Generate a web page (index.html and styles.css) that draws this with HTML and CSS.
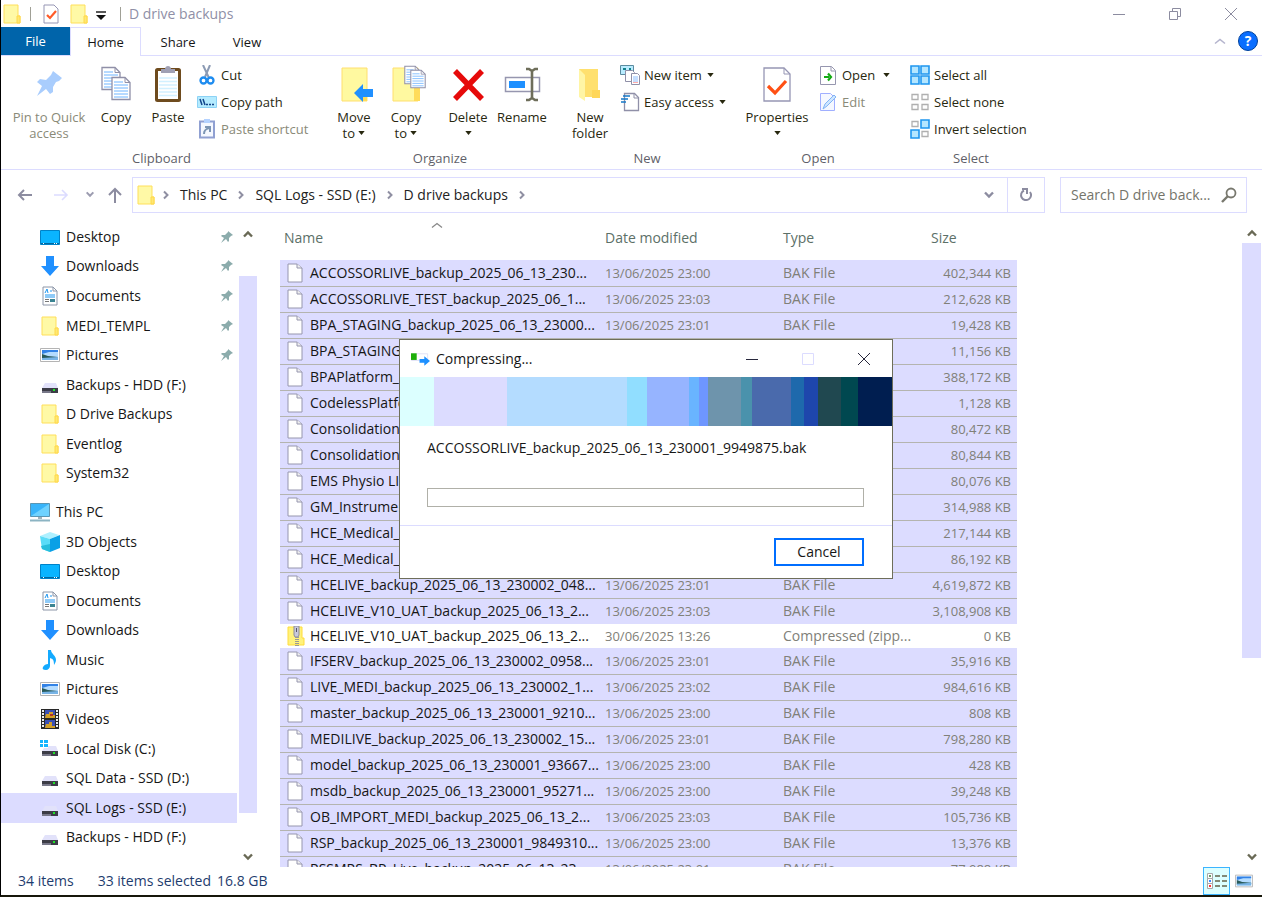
FILE: index.html
```html
<!DOCTYPE html>
<html lang="en">
<head>
<meta charset="utf-8">
<title>D drive backups</title>
<link rel="stylesheet" href="styles.css">
</head>
<body>
<svg class="defs" aria-hidden="true">
  <symbol id="folder" viewBox="0 0 18 20"><path d="M1 1h14v11h2v7H1z" fill="#fff9a6" stroke="#ffdf5a"/><path d="M14 18v-6h3v7h-3z" fill="#ffe873" stroke="#ffd84a"/></symbol>
  <symbol id="file" viewBox="0 0 16 20"><path d="M1 1h9l5 4v14H1z" fill="#fff" stroke="#9696ae"/><path d="M10 1v4h5" fill="#eee" stroke="#9696ae"/></symbol>
  <symbol id="zip" viewBox="0 0 18 20"><path d="M1 1h14v11h2v7H1z" fill="#fff27c" stroke="#ffdc3c"/><path d="M7 0h5v9l-1 2H8L7 9z" fill="#c8c8dc" stroke="#8c8c9c"/><path d="M9.500 2v4" stroke="#556"/><path d="M10 11v9" stroke="#999" stroke-width="4" stroke-dasharray="1 1"/></symbol>
  <symbol id="desk" viewBox="0 0 20 20"><path d="M.5 3.500h19v14H.5z" fill="#0ab4ff" stroke="#0082c8"/><path d="M1 16.500h18" stroke="#0068a0"/><path d="M3 16.500h1m10 0h1m1 0h1" stroke="#fff"/></symbol>
  <symbol id="down" viewBox="0 0 20 20"><path d="M6 0h8v10h5l-9 10L1 10h5z" fill="#2090ff"/></symbol>
  <symbol id="doc" viewBox="0 0 20 20"><path d="M3 1h10l4 4v14H3z" fill="#fff" stroke="#8c96a8"/><path d="M13 1v4h4" fill="none" stroke="#8c96a8"/><path d="M5 7l2-4 1 4M10 5h2M5 9h10M5 11h10" stroke="#1e96f0" fill="none"/><path d="M5 13.500h4M5 15.500h4" stroke="#777"/><path d="M10 13h5v3h-5z" fill="#3b8492"/></symbol>
  <symbol id="pic" viewBox="0 0 20 20"><path d="M.5 3.500h19v13H.5z" fill="#fff" stroke="#b4b4b4"/><path d="M2 5h16v10H2z" fill="#b4dcff"/><path d="M2 5h16v2L9 7 2 9z" fill="#3282e6"/><path d="M2 9l6 2 10 1v1l-16 1z" fill="#285a5a"/><path d="M2 13l16-1v3H2z" fill="#78b4e6"/></symbol>
  <symbol id="drive" viewBox="0 0 20 20"><path d="M5 8h11l2 5H2z" fill="#e2e2fa"/><path d="M2 13h16v5H2z" fill="#3c3c46"/><path d="M2 16h9v2H2z" fill="#777788"/><path d="M13 14h2v2h-2z" fill="#1ee628"/></symbol>
  <symbol id="cdrive" viewBox="0 0 20 20"><path d="M0 1h3v3H0zM4 1h4v3H4zM0 5h3v3H0zM4 5h4v3H4z" fill="#14b4ff"/><path d="M8 7h8l2 5H2l2-3h4z" fill="#e2e2fa"/><path d="M2 12h16v5H2z" fill="#3c3c46"/><path d="M2 15h9v2H2z" fill="#777788"/><path d="M13 13h2v2h-2z" fill="#1ee628"/></symbol>
  <symbol id="pc" viewBox="0 0 20 20"><path d="M.5 1.500h19v13H.5z" fill="#38b4fa" stroke="#5a96b4"/><path d="M1 14L19 2v12z" fill="#6ed2ff"/><path d="M8 15h4v2H8z" fill="#a0b4be"/><path d="M0 18.500h20" stroke="#8cb4c3" stroke-width="2"/></symbol>
  <symbol id="cube" viewBox="0 0 20 20"><path d="M0 4l10-4 9 3-9 4z" fill="#aef0ff"/><path d="M0 4l10 3v13L2 17z" fill="#5adcf8"/><path d="M10 7l10-4v13l-10 4z" fill="#0aa0e6"/><path d="M1 14l9-2v8l-8-3z" fill="#28bedc"/></symbol>
  <symbol id="music" viewBox="0 0 20 20"><path d="M8 0h3c0 4 5 5 5 10 0 2-1 3-2 5 0-5-1-6-4-7v8c0 2-2 4-4 4-3 0-4-1-3-3s3-3 5-3z" fill="#14aaff"/></symbol>
  <symbol id="video" viewBox="0 0 20 20"><path d="M1 0h18v20H1z" fill="#282828"/><path d="M3 1v18M17 1v18" stroke="#f0f0f0" stroke-width="2" stroke-dasharray="2 1"/><path d="M5 1h10v8H5zM5 11h10v8H5z" fill="#3c50b4"/><path d="M6 5h3V3h4v3h2v3H5zM6 15h3v-2h3v4h3v2H5z" fill="#d2a028"/><path d="M10 5h3v2h-3z" fill="#b43228"/></symbol>
  <symbol id="pin" viewBox="0 0 14 14"><path d="M8 1l5 4-2 1-2 2v3l-1 1-2-3-5 4 3-5-3-2 1-1h3l3-3z" fill="#8cacac"/></symbol>
  <symbol id="up" viewBox="0 0 12 8"><path d="M2 6.500l4-4 4 4" fill="none" stroke="#696955" stroke-width="2.400"/></symbol>
  <symbol id="dn" viewBox="0 0 12 8"><path d="M2 1.500l4 4 4-4" fill="none" stroke="currentColor" stroke-width="2.400"/></symbol>
  <symbol id="right" viewBox="0 0 8 10"><path d="M2 1.500L5.500 5 2 8.500" fill="none" stroke="#8f8fa2" stroke-width="2"/></symbol>
  <symbol id="caret" viewBox="0 0 8 5"><path d="M0 0h8L4 5z" fill="#28280f"/></symbol>
  <symbol id="sheet" viewBox="0 0 20 24"><path d="M1 1h13l5 5v17H1z" fill="#fff" stroke="#9090a8" stroke-width="1.300"/><path d="M14 1v5h5" fill="none" stroke="#9090a8"/><path d="M3 5.500h9M3 8.500h14M3 11.500h14M3 14.500h14M3 17.500h14M3 20.500h14" stroke="#6eb4ff"/></symbol>
</svg>

<div class="window">
  <header class="titlebar">
    <svg class="i-folder"><use href="#folder"/></svg>
    <span class="bar"></span>
    <svg class="i-check" viewBox="0 0 16 20"><path d="M1 1h10l4 4v14H1z" fill="#fff" stroke="#9696b4"/><path d="M4 11l3 3 6-7" fill="none" stroke="#ff5a28" stroke-width="2.200"/></svg>
    <svg class="i-folder"><use href="#folder"/></svg>
    <svg class="i-qat" viewBox="0 0 10 9"><path d="M0 1h10" stroke="#222" stroke-width="1.500"/><path d="M0 4h10L5 9z" fill="#111"/></svg>
    <span class="bar"></span>
    <h1 class="title">D drive backups</h1>
    <div class="winbtns">
      <button aria-label="Minimize"><svg viewBox="0 0 14 14"><path d="M1 7.500h12"/></svg></button>
      <button aria-label="Restore"><svg viewBox="0 0 14 14"><path d="M1.500 4.500h8v8h-8zM4.500 4V1.500h8v8H10"/></svg></button>
      <button aria-label="Close"><svg viewBox="0 0 14 14"><path d="M1 1l12 12M13 1L1 13"/></svg></button>
    </div>
  </header>

  <nav class="tabs">
    <button class="tab file-tab">File</button>
    <button class="tab active">Home</button>
    <button class="tab">Share</button>
    <button class="tab">View</button>
    <div class="tab-end">
      <button aria-label="Collapse ribbon"><svg class="i-col" viewBox="0 0 12 8"><path d="M1 6.500l5-4 5 4" fill="none" stroke="#b4b4cd" stroke-width="1.600"/></svg></button>
      <button class="help" aria-label="Help">?</button>
    </div>
  </nav>

  <section class="ribbon">
    <div class="group clipboard">
      <div class="tools">
        <button class="big w80 off"><svg viewBox="0 0 36 36"><path d="M22 5l9 7-3 3-3 1-3 5v5l-3 2-4-5-9 7 5-10-5-4 3-3 6 1 5-5z" fill="#a9cdfd"/></svg>Pin to Quick access</button>
        <button class="big w54"><svg viewBox="0 0 36 36"><svg x="3" y="0" width="20" height="25"><use href="#sheet"/></svg><svg x="13" y="10" width="20" height="25"><use href="#sheet"/></svg></svg>Copy</button>
        <button class="big w50"><svg viewBox="0 0 36 36"><rect x="6.500" y="3.500" width="23" height="31" rx="1" fill="#fff" stroke="#6e4b1e" stroke-width="3"/><path d="M9 12h18M9 15.500h18M9 19h18M9 22.500h18M9 26h18M9 29.500h18" stroke="#d2f0ff" stroke-width="1.500"/><path d="M11 3h4c0-4 6-4 6 0h4v4H11z" fill="#a0a0b4"/></svg>Paste</button>
        <div class="smalls">
          <button><svg viewBox="0 0 20 20"><path d="M6 0l6 13M13 0L8 12" stroke="#8c9bb4" stroke-width="2"/><circle cx="6.500" cy="15.500" r="3" fill="none" stroke="#1e8cf0" stroke-width="2.300"/><circle cx="13.500" cy="15.500" r="3" fill="none" stroke="#1e8cf0" stroke-width="2.300"/></svg>Cut</button>
          <button><svg viewBox="0 0 20 20"><path d="M.5 4.500h19v11H.5z" fill="#b4ebff" stroke="#8cd2f5"/><path d="M3 7l2 6M6 7l2 6M9 12.500h2M12 12.500h2M15 12.500h2" stroke="#14468c" stroke-width="1.500"/></svg>Copy path</button>
          <button class="off"><svg viewBox="0 0 20 20"><path d="M3 2.500h14v16H3z" fill="#f5f8ff" stroke="#90a0d2" stroke-width="2"/><path d="M7 0h6v4H7z" fill="#b4d2ff"/><path d="M7 15c0-4 2-5 5-6M8 8h5v5" fill="none" stroke="#7d96b4" stroke-width="2"/></svg>Paste shortcut</button>
        </div>
      </div>
      <h2>Clipboard</h2>
    </div>
    <div class="group organize">
      <div class="tools">
        <button class="big w52"><svg viewBox="0 0 36 36"><path d="M6 2h25v33H6z" fill="#fff9a0" stroke="#ffdf6e"/><path d="M26 25h5v10h-5z" fill="#ffdc5a"/><path d="M18 27l9-9v5h10v8H27v5z" fill="#2090ff"/></svg>Move<span>to <svg class="caret"><use href="#caret"/></svg></span></button>
        <button class="big w52"><svg viewBox="0 0 36 36"><path d="M5 2h25v33H5z" fill="#fff9a0" stroke="#ffdf6e"/><path d="M26 22h6v13h-6z" fill="#ffdc5a"/><svg x="16" y="-1" width="16" height="20"><use href="#sheet"/></svg><svg x="22" y="3" width="16" height="20"><use href="#sheet"/></svg></svg>Copy<span>to <svg class="caret"><use href="#caret"/></svg></span></button>
        <button class="big w52 del"><svg viewBox="0 0 36 36"><path d="M5 5l27 28M32 5L5 33" stroke="#e60a0a" stroke-width="5.500"/></svg>Delete<span><svg class="caret"><use href="#caret"/></svg></span></button>
        <button class="big w56"><svg viewBox="0 0 36 36"><path d="M1.500 11.500h34v14h-34z" fill="#fff" stroke="#9696af" stroke-width="1.500"/><path d="M5 15h16v7H5z" fill="#1e90ff"/><path d="M22 3h3l3 2 3-2h3M22 34h3l3-2 3 2h3M28 4v29" fill="none" stroke="#6e6e5a" stroke-width="2.600"/></svg>Rename</button>
      </div>
      <h2>Organize</h2>
    </div>
    <div class="group new">
      <div class="tools">
        <button class="big w52"><svg viewBox="0 0 36 36"><path d="M7 3h19v28H7z" fill="#ffe06e"/><path d="M7 3l6 6v26l-6-4z" fill="#fff5a5"/><path d="M20 24h8v8h-8z" fill="#ffd75a"/></svg>New<br>folder</button>
        <div class="smalls">
          <button><svg viewBox="0 0 20 20"><path d="M.5 .5h13v9H.5z" fill="#b9ecff" stroke="#5c8ca0"/><path d="M3 4h3M9 4h2" stroke="#14828c" stroke-width="2"/><path d="M5.500 5.500h7l2 2v9h-9z" fill="#fff" stroke="#9090a8"/><path d="M11.500 8.500h6l2 2v9h-8z" fill="#fff" stroke="#9090a8"/><path d="M13 12h5M13 14h5M13 16h5" stroke="#8cbeff"/><path d="M13 17.500h5" stroke="#ffaaaa"/></svg>New item <svg class="caret"><use href="#caret"/></svg></button>
          <button><svg viewBox="0 0 20 20"><path d="M4.500 1.500h10l4 4v13h-14z" fill="#fff" stroke="#9090a8" stroke-width="1.300"/><path d="M14 2v4h4" fill="none" stroke="#9090a8"/><path d="M3 4h7M1 7h7M1 10h5" stroke="#1478c8" stroke-width="1.600"/></svg>Easy access <svg class="caret"><use href="#caret"/></svg></button>
        </div>
      </div>
      <h2>New</h2>
    </div>
    <div class="group open">
      <div class="tools">
        <button class="big w70"><svg viewBox="0 0 36 36"><path d="M5 2h20l6 6v27H5z" fill="#fff" stroke="#9696b4" stroke-width="1.300"/><path d="M25 2v6h6" fill="none" stroke="#9696b4"/><path d="M9 20l7 7 11-12" fill="none" stroke="#ff5014" stroke-width="3.200"/></svg>Properties<span><svg class="caret"><use href="#caret"/></svg></span></button>
        <div class="smalls">
          <button><svg viewBox="0 0 20 20"><path d="M2.500 1.500h11l4 4v14h-15z" fill="#fff" stroke="#9696af"/><path d="M13 2v4h4" fill="none" stroke="#9696af"/><path d="M6 12h5M10 8.500l3 3.500-3 3.500" fill="none" stroke="#14aa14" stroke-width="2.200"/></svg>Open <svg class="caret wide"><use href="#caret"/></svg></button>
          <button class="off"><svg viewBox="0 0 20 20"><path d="M2.500 1.500h10l4 4v13h-14z" fill="#f5f8ff" stroke="#a0afff"/><path d="M5 17l2-5L16 3l2 2-9 9z" fill="#cde6ff" stroke="#82b4f5"/></svg>Edit</button>
        </div>
      </div>
      <h2>Open</h2>
    </div>
    <div class="group select">
      <div class="tools">
        <div class="smalls">
          <button><svg viewBox="0 0 20 20"><path d="M1 1h8v8H1zM11 1h8v8h-8zM1 11h8v8H1zM11 11h8v8h-8z" fill="#b4e6ff" stroke="#1e96f0" stroke-width="1.600"/></svg>Select all</button>
          <button><svg viewBox="0 0 20 20"><path d="M2 2.500h6v5H2zM12 2.500h6v5h-6zM2 12.500h6v5H2zM12 12.500h6v5h-6z" fill="#fff" stroke="#b0b0b0" stroke-width="1.300"/></svg>Select none</button>
          <button><svg viewBox="0 0 20 20"><path d="M2 2.500h6v5H2zM12 12.500h6v5h-6z" fill="#fff" stroke="#b0b0b0" stroke-width="1.300"/><path d="M11 1h8v8h-8zM1 11h8v8H1z" fill="#b4e6ff" stroke="#1e96f0" stroke-width="1.600"/></svg>Invert selection</button>
        </div>
      </div>
      <h2>Select</h2>
    </div>
  </section>

  <section class="address">
    <div class="history">
      <button aria-label="Back"><svg class="s16" viewBox="0 0 16 16"><path d="M15 8H2M7 3L2 8l5 5" fill="none" stroke="#8c8ca0" stroke-width="2"/></svg></button>
      <button aria-label="Forward"><svg class="s16" viewBox="0 0 16 16"><path d="M1 8h13M9 3l5 5-5 5" fill="none" stroke="#dcdcff" stroke-width="1.600"/></svg></button>
      <button aria-label="Recent locations" class="recent"><svg class="chev"><use href="#dn"/></svg></button>
      <button aria-label="Up"><svg class="s16" viewBox="0 0 16 16"><path d="M8 16V2M2 8l6-6 6 6" fill="none" stroke="#8c8ca0" stroke-width="2"/></svg></button>
    </div>
    <div class="pathbox">
      <div class="crumbs">
        <svg class="i-folder"><use href="#folder"/></svg>
        <svg class="sep"><use href="#right"/></svg><a href="#pc-view">This PC</a>
        <svg class="sep"><use href="#right"/></svg><a href="#e-view">SQL Logs - SSD (E:)</a>
        <svg class="sep"><use href="#right"/></svg><a href="#d-view">D drive backups</a>
        <svg class="sep"><use href="#right"/></svg>
      </div>
      <button class="drop" aria-label="Previous locations"><svg class="chev"><use href="#dn"/></svg></button>
      <button class="refresh" aria-label="Refresh"><svg class="s14" viewBox="0 0 14 14"><path d="M11 4a5 5 0 1 1-6-1.500" fill="none" stroke="#8c8ca0" stroke-width="2"/><path d="M3 1h5v5" fill="none" stroke="#8c8ca0" stroke-width="2"/></svg></button>
    </div>
    <label class="search"><input type="text" aria-label="Search D drive backups" placeholder="Search D drive back..."><svg class="s16" viewBox="0 0 16 16"><circle cx="10" cy="6" r="4.500" fill="none" stroke="#78786e" stroke-width="1.800"/><path d="M7 9l-6 6" stroke="#78786e" stroke-width="2.400"/></svg></label>
  </section>

  <main class="content">
    <nav class="tree">
      <a href="#q1"><svg><use href="#desk"/></svg>Desktop<svg class="pin"><use href="#pin"/></svg></a>
      <a href="#q2"><svg><use href="#down"/></svg>Downloads<svg class="pin"><use href="#pin"/></svg></a>
      <a href="#q3"><svg><use href="#doc"/></svg>Documents<svg class="pin"><use href="#pin"/></svg></a>
      <a href="#q4"><svg><use href="#folder"/></svg>MEDI_TEMPL<svg class="pin"><use href="#pin"/></svg></a>
      <a href="#q5"><svg><use href="#pic"/></svg>Pictures<svg class="pin"><use href="#pin"/></svg></a>
      <a href="#q6"><svg><use href="#drive"/></svg>Backups - HDD (F:)</a>
      <a href="#q7"><svg><use href="#folder"/></svg>D Drive Backups</a>
      <a href="#q8"><svg><use href="#folder"/></svg>Eventlog</a>
      <a href="#q9"><svg><use href="#folder"/></svg>System32</a>
      <a href="#p0" class="root"><svg><use href="#pc"/></svg>This PC</a>
      <a href="#p1"><svg><use href="#cube"/></svg>3D Objects</a>
      <a href="#p2"><svg><use href="#desk"/></svg>Desktop</a>
      <a href="#p3"><svg><use href="#doc"/></svg>Documents</a>
      <a href="#p4"><svg><use href="#down"/></svg>Downloads</a>
      <a href="#p5"><svg><use href="#music"/></svg>Music</a>
      <a href="#p6"><svg><use href="#pic"/></svg>Pictures</a>
      <a href="#p7"><svg><use href="#video"/></svg>Videos</a>
      <a href="#p8"><svg><use href="#cdrive"/></svg>Local Disk (C:)</a>
      <a href="#p9"><svg><use href="#drive"/></svg>SQL Data - SSD (D:)</a>
      <a href="#p10" class="current"><svg><use href="#drive"/></svg>SQL Logs - SSD (E:)</a>
      <a href="#p11"><svg><use href="#drive"/></svg>Backups - HDD (F:)</a>
    </nav>
    <div class="scroll tree-scroll">
      <svg class="chev"><use href="#up"/></svg><div class="track"><div class="thumb"></div></div><svg class="chev"><use href="#dn"/></svg>
    </div>

    <div class="files">
      <table>
        <colgroup><col class="c-name"><col class="c-date"><col class="c-type"><col class="c-size"></colgroup>
        <thead><tr><th>Name<svg class="sort" viewBox="0 0 12 6"><path d="M1 5.500l5-4 5 4" fill="none" stroke="#888" stroke-width="1.300"/></svg></th><th>Date modified</th><th>Type</th><th>Size</th></tr></thead>
        <tbody>
          <tr><td><svg><use href="#file"/></svg>ACCOSSORLIVE_backup_2025_06_13_230...</td><td>13/06/2025 23:00</td><td>BAK File</td><td>402,344 KB</td></tr>
          <tr><td><svg><use href="#file"/></svg>ACCOSSORLIVE_TEST_backup_2025_06_1...</td><td>13/06/2025 23:03</td><td>BAK File</td><td>212,628 KB</td></tr>
          <tr><td><svg><use href="#file"/></svg>BPA_STAGING_backup_2025_06_13_23000...</td><td>13/06/2025 23:01</td><td>BAK File</td><td>19,428 KB</td></tr>
          <tr><td><svg><use href="#file"/></svg>BPA_STAGING</td><td></td><td></td><td>11,156 KB</td></tr>
          <tr><td><svg><use href="#file"/></svg>BPAPlatform_</td><td></td><td></td><td>388,172 KB</td></tr>
          <tr><td><svg><use href="#file"/></svg>CodelessPlatfo</td><td></td><td></td><td>1,128 KB</td></tr>
          <tr><td><svg><use href="#file"/></svg>Consolidation</td><td></td><td></td><td>80,472 KB</td></tr>
          <tr><td><svg><use href="#file"/></svg>Consolidation</td><td></td><td></td><td>80,844 KB</td></tr>
          <tr><td><svg><use href="#file"/></svg>EMS Physio LI</td><td></td><td></td><td>80,076 KB</td></tr>
          <tr><td><svg><use href="#file"/></svg>GM_Instrumen</td><td></td><td></td><td>314,988 KB</td></tr>
          <tr><td><svg><use href="#file"/></svg>HCE_Medical_</td><td></td><td></td><td>217,144 KB</td></tr>
          <tr><td><svg><use href="#file"/></svg>HCE_Medical_</td><td></td><td></td><td>86,192 KB</td></tr>
          <tr><td><svg><use href="#file"/></svg>HCELIVE_backup_2025_06_13_230002_048...</td><td>13/06/2025 23:01</td><td>BAK File</td><td>4,619,872 KB</td></tr>
          <tr><td><svg><use href="#file"/></svg>HCELIVE_V10_UAT_backup_2025_06_13_2...</td><td>13/06/2025 23:03</td><td>BAK File</td><td>3,108,908 KB</td></tr>
          <tr class="plain"><td><svg class="zip"><use href="#zip"/></svg>HCELIVE_V10_UAT_backup_2025_06_13_2...</td><td>30/06/2025 13:26</td><td>Compressed (zipp...</td><td>0 KB</td></tr>
          <tr><td><svg><use href="#file"/></svg>IFSERV_backup_2025_06_13_230002_0958...</td><td>13/06/2025 23:01</td><td>BAK File</td><td>35,916 KB</td></tr>
          <tr><td><svg><use href="#file"/></svg>LIVE_MEDI_backup_2025_06_13_230002_1...</td><td>13/06/2025 23:02</td><td>BAK File</td><td>984,616 KB</td></tr>
          <tr><td><svg><use href="#file"/></svg>master_backup_2025_06_13_230001_9210...</td><td>13/06/2025 23:00</td><td>BAK File</td><td>808 KB</td></tr>
          <tr><td><svg><use href="#file"/></svg>MEDILIVE_backup_2025_06_13_230002_15...</td><td>13/06/2025 23:01</td><td>BAK File</td><td>798,280 KB</td></tr>
          <tr><td><svg><use href="#file"/></svg>model_backup_2025_06_13_230001_93667...</td><td>13/06/2025 23:00</td><td>BAK File</td><td>428 KB</td></tr>
          <tr><td><svg><use href="#file"/></svg>msdb_backup_2025_06_13_230001_95271...</td><td>13/06/2025 23:00</td><td>BAK File</td><td>39,248 KB</td></tr>
          <tr><td><svg><use href="#file"/></svg>OB_IMPORT_MEDI_backup_2025_06_13_2...</td><td>13/06/2025 23:03</td><td>BAK File</td><td>105,736 KB</td></tr>
          <tr><td><svg><use href="#file"/></svg>RSP_backup_2025_06_13_230001_9849310...</td><td>13/06/2025 23:00</td><td>BAK File</td><td>13,376 KB</td></tr>
          <tr><td><svg><use href="#file"/></svg>RSSMRS_BP_Live_backup_2025_06_13_23...</td><td>13/06/2025 23:01</td><td>BAK File</td><td>77,988 KB</td></tr>
        </tbody>
      </table>
    </div>
    <div class="scroll file-scroll">
      <svg class="chev"><use href="#up"/></svg><div class="track"><div class="thumb"></div></div><svg class="chev"><use href="#dn"/></svg>
    </div>
  </main>

  <footer class="status">
    <span>34 items</span><span>33 items selected</span><span>16.8 GB</span>
    <div class="views">
      <button class="on" aria-label="Details view"><svg viewBox="0 0 20 16"><path d="M.5 .5h5v5h-5zM.5 5.500h5v5h-5zM.5 10.500h5v5h-5z" fill="#fff" stroke="#a8a8a8"/><path d="M8 3h5M15 3h5M8 8h5M15 8h5M8 13h5M15 13h5" stroke="#64644b" stroke-width="1.400"/><path d="M2 3h2" stroke="#696" stroke-width="2"/><path d="M2 8h2" stroke="#3c8cff" stroke-width="2"/><path d="M2 13h2" stroke="#f33" stroke-width="2"/></svg></button>
      <button aria-label="Thumbnail view"><svg viewBox="0 0 20 20"><use href="#pic"/></svg></button>
    </div>
  </footer>

  <section class="dialog" role="dialog" aria-label="Compressing">
    <div class="dlg-title">
      <svg class="i-comp" viewBox="0 0 20 14"><path d="M.5 1.500h17v7H.5z" fill="#fff" stroke="#e0e0f5"/><path d="M0 1h6v7H0z" fill="#1eaf0a"/><path d="M9 7h5V4l6 5-6 5v-3H9z" fill="#1e90ff"/></svg>
      <h2>Compressing...</h2>
      <div class="winbtns dark">
        <button aria-label="Minimize dialog"><svg viewBox="0 0 14 14"><path d="M1 7.500h12"/></svg></button>
        <button aria-label="Maximize dialog" disabled><svg viewBox="0 0 14 14"><path d="M1.500 1.500h11v11h-11z"/></svg></button>
        <button aria-label="Close dialog"><svg viewBox="0 0 14 14"><path d="M1 1l12 12M13 1L1 13"/></svg></button>
      </div>
    </div>
    <div class="banner"></div>
    <div class="dlg-body">
      <p id="job">ACCOSSORLIVE_backup_2025_06_13_230001_9949875.bak</p>
      <div class="progress" role="progressbar" aria-labelledby="job" aria-valuenow="0"></div>
    </div>
    <div class="dlg-foot"><button class="cancel">Cancel</button></div>
  </section>
</div>
</body>
</html>
```
FILE: styles.css
```css
* { box-sizing: border-box; }
body { margin: 0; background: #fff; color: #161616; font: 14px/16px "Open Sans", "Noto Sans", sans-serif; }
button { font: inherit; color: inherit; background: none; border: 0; padding: 0; margin: 0; }
a { color: inherit; text-decoration: none; }
h1, h2, p { margin: 0; font: inherit; }
svg { flex: none; }
.defs { position: absolute; width: 0; height: 0; }

.window { position: relative; display: flex; flex-direction: column; height: 100vh; overflow: hidden; border-left: 1px solid #000; border-bottom: 2px solid #17170a; }

.titlebar { display: flex; align-items: center; height: 27px; padding-left: 2px; }
.i-folder { width: 18px; height: 20px; }
.i-check { width: 16px; height: 20px; margin: 0 11px 0 12px; }
.i-qat { width: 10px; height: 9px; margin: 4px 5px 0 8px; }
.bar { width: 1px; height: 14px; background: #a0a096; margin-left: 9px; }
.title { margin-left: 8px; color: #8f8fa6; }
.winbtns { display: flex; margin-left: auto; height: 24px; padding-right: 3px; }
.winbtns button { width: 56px; display: grid; place-items: center; }
.winbtns svg { width: 14px; height: 14px; fill: none; stroke: #8c8ca0; }

.tabs { display: flex; height: 29px; border-bottom: 1px solid #dcdcff; font-size: 13px; }
.tab { width: 69px; height: 29px; }
.file-tab { background: #0064aa; color: #fff; height: 28px; }
.tab.active { width: 71px; background: #fff; border: 1px solid #dcdcff; border-bottom: 0; }
.tab.active + .tab { width: 74px; }
.tab:nth-child(4) { width: 64px; }
.tab-end { display: flex; align-items: center; gap: 12px; margin-left: auto; padding-right: 4px; }
.i-col { width: 12px; height: 8px; display: block; }
.help { width: 20px; height: 20px; border-radius: 50%; background: #0a6eff; border: 1px solid #00419b; color: #fff; font-weight: 700; font-size: 14px; }

.ribbon { display: flex; height: 114px; border-bottom: 1px solid #dcdcff; color: #28280f; font-size: 13px; }
.group { display: flex; flex-direction: column; }
.clipboard { width: 321px; padding-left: 8px; }
.organize { width: 236px; padding-left: 6px; }
.new { width: 178px; padding-left: 6px; }
.open { width: 164px; padding-left: 6px; }
.select { width: 142px; padding-left: 10px; }
.group h2 { text-align: center; color: #5f5f69; }
.clipboard h2 { padding-right: 8px; }
.organize h2, .new h2, .open h2 { padding-right: 6px; }
.select h2 { padding-right: 10px; }
.tools { display: flex; height: 94px; padding-top: 5px; }
.big { display: flex; flex-direction: column; align-items: center; line-height: 16px; padding-top: 5px; align-self: flex-start; }
.big > svg { width: 36px; height: 36px; margin-bottom: 7px; overflow: visible; }
.big span { display: block; white-space: nowrap; }
.caret { width: 7px; height: 4px; vertical-align: 3px; }
.w80 { width: 80px; } .w54 { width: 54px; } .w50 { width: 50px; } .w52 { width: 52px; } .w56 { width: 56px; } .w70 { width: 70px; }
.del { margin-left: 10px; }
.off { color: #8a8a78; }
.smalls { display: flex; flex-direction: column; margin-left: 4px; }
.open .smalls { margin-left: 6px; }
.select .smalls { margin-left: 0; }
.smalls button { display: flex; align-items: center; gap: 4px; height: 27px; white-space: nowrap; }
.smalls button > svg:first-child { width: 20px; height: 20px; }
.smalls .caret { margin-left: 1px; }
.smalls .caret.wide { margin-left: 4px; }

.address { display: flex; align-items: center; height: 49px; padding: 0 15px 0 16px; color: #222; }
.history { display: flex; align-items: center; width: 115px; color: #9c9cb0; }
.history button { width: 16px; margin-right: 20px; }
.history button:nth-child(2) { margin-right: 16px; }
.history .recent { width: 10px; margin-right: 12px; }
.history button:last-child { margin: 0; }
.history svg, .refresh svg, .drop svg { display: block; margin: 0 auto; }
.recent .chev { width: 10px; height: 7px; }
.s16 { width: 16px; height: 16px; }
.s14 { width: 14px; height: 14px; }
.chev { width: 12px; height: 8px; }
.pathbox { display: flex; flex: 1; height: 36px; border: 1px solid #dcdcff; }
.crumbs { display: flex; flex: 1; align-items: center; padding-left: 4px; }
.sep { width: 8px; height: 10px; margin: 0 10px; }
.i-folder + .sep { margin-left: 7px; }
.drop { width: 36px; color: #8c8ca0; }
.refresh { width: 37px; border-left: 1px solid #dcdcff; }
.search { display: flex; align-items: center; width: 187px; height: 36px; margin-left: 15px; padding: 0 9px 0 10px; border: 1px solid #dcdcff; }
.search input { flex: 1; min-width: 0; border: 0; padding: 0; background: none; font: inherit; outline: 0; }
.search input::placeholder { color: #74746a; opacity: 1; }

.content { display: flex; flex: 1; min-height: 0; }
.tree { display: flex; flex-direction: column; width: 236px; padding: 3px 0 15px; }
.tree a { display: flex; flex: 1; align-items: center; gap: 6px; padding: 0 3px 0 39px; }
.tree svg { width: 20px; height: 20px; }
.tree .pin { width: 14px; height: 14px; margin-left: auto; }
.tree .root { padding-left: 29px; margin-top: 9px; }
.tree .current { background: #dcdcff; }
.scroll { display: flex; flex-direction: column; align-items: center; width: 20px; color: #696955; }
.tree-scroll { padding: 11px 0 6px; margin-left: 1px; }
.file-scroll { padding: 10px 0 6px; }
.track { display: flex; flex: 1; flex-direction: column; width: 100%; }
.thumb { background: #dcdcff; }
.tree-scroll .track { padding: 38px 1px 40px 1px; }
.tree-scroll .thumb { flex: 1; }
.file-scroll .track { padding-top: 6px; }
.file-scroll .thumb { height: 68%; margin-right: 1px; }

.files { flex: 1; overflow: hidden; padding-left: 22px; }
table { table-layout: fixed; width: 737px; border-collapse: collapse; }
.c-name { width: 325px; } .c-date { width: 178px; } .c-type { width: 148px; } .c-size { width: 86px; }
th { height: 41px; padding: 0 0 4px; text-align: left; font-weight: 400; color: #5c7068; }
th:first-child { padding-left: 4px; position: relative; }
.sort { position: absolute; left: 151px; top: 3px; width: 12px; height: 6px; }
tbody tr { height: 26px; background: #dcdcff; border-bottom: 1px solid #b4b4af; color: #808078; }
tbody tr.plain { height: 24px; background: #fff; }
tbody tr.plain, tbody tr:nth-child(14) { border-bottom: 0; }
td { padding: 0; white-space: nowrap; }
td:first-child { padding-left: 7px; color: #161616; }
td:nth-child(2), td:last-child { font-size: 13px; }
td:last-child { text-align: right; padding-right: 6px; }
td svg { width: 16px; height: 20px; margin-right: 7px; vertical-align: -5px; }
td .zip { width: 18px; margin-right: 5px; }

.status { display: flex; align-items: center; height: 28px; padding-left: 17px; color: #1e3c6e; }
.status span:nth-child(1) { margin-right: 24px; }
.status span:nth-child(2) { margin-right: 6px; }
.views { display: flex; margin-left: auto; padding-right: 5px; }
.views button { display: grid; place-items: center; width: 27px; height: 28px; }
.views .on { background: #dcffff; border: 1px solid #3cb4ff; }
.views svg { width: 20px; height: 16px; }
.views button:last-child svg { width: 18px; height: 18px; }

.dialog { position: absolute; left: 398px; top: 339px; width: 494px; background: #fff; border: 1px solid #6e6e5a; color: #161616; }
.dlg-title { display: flex; align-items: center; height: 37px; padding-left: 11px; }
.i-comp { width: 19px; height: 14px; margin-right: 6px; }
.dlg-title .winbtns { padding-right: 0; }
.winbtns.dark svg { stroke: #28283c; }
.winbtns.dark button:disabled svg { stroke: #dcdcff; }
.banner { height: 49px; background: linear-gradient(90deg, #dcffff 7%, #dcdcff 7% 21.800%, #b4dcff 21.800% 46.200%, #91deff 46.200% 50.200%, #96b4ff 50.200% 58.800%, #69b4ff 58.800% 60.800%, #6e96ff 60.800% 62.500%, #6e94ac 62.500% 69.300%, #4a92ac 69.300% 71.500%, #4a6aac 71.500% 79.500%, #1e69ac 79.500% 82.200%, #1e46ac 82.200% 84.900%, #204850 84.900% 89.700%, #004850 89.700% 93%, #001e50 93%); }
.dlg-body { padding: 14px 28px 18px 27px; border-bottom: 1px solid #dcdcff; }
.progress { height: 19px; margin-top: 32px; border: 1px solid #b0b0a8; }
.dlg-foot { display: flex; justify-content: flex-end; padding: 12px 28px 12px 0; }
.cancel { width: 90px; height: 28px; border: 2px solid #006eff; }
```
